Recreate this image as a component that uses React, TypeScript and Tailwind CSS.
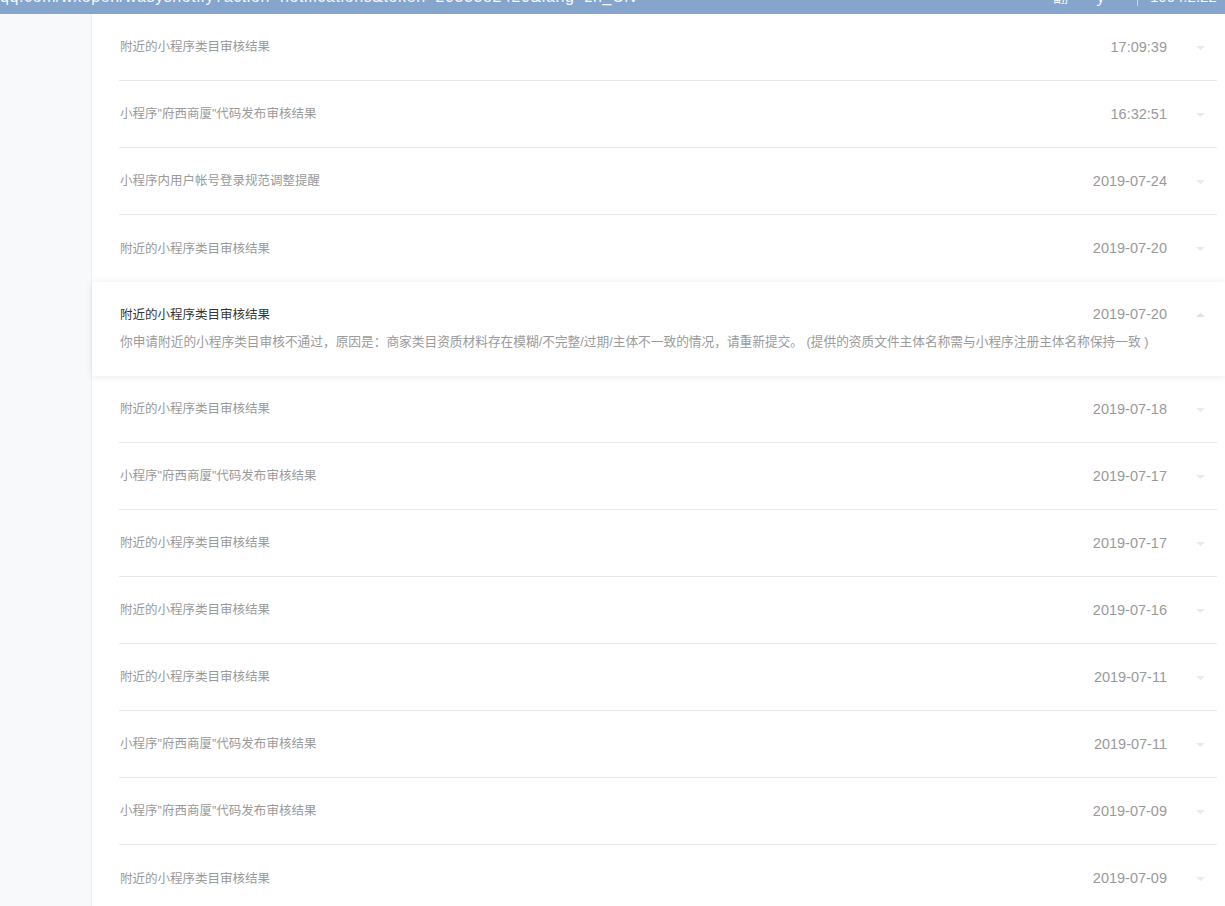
import React from 'react'

type Notice = { title: string; date: string; detail?: string }

const notices: Notice[] = [
  { title: '附近的小程序类目审核结果', date: '17:09:39' },
  { title: '小程序"府西商厦"代码发布审核结果', date: '16:32:51' },
  { title: '小程序内用户帐号登录规范调整提醒', date: '2019-07-24' },
  { title: '附近的小程序类目审核结果', date: '2019-07-20' },
  {
    title: '附近的小程序类目审核结果',
    date: '2019-07-20',
    detail:
      '你申请附近的小程序类目审核不通过，原因是：商家类目资质材料存在模糊/不完整/过期/主体不一致的情况，请重新提交。 (提供的资质文件主体名称需与小程序注册主体名称保持一致 )',
  },
  { title: '附近的小程序类目审核结果', date: '2019-07-18' },
  { title: '小程序"府西商厦"代码发布审核结果', date: '2019-07-17' },
  { title: '附近的小程序类目审核结果', date: '2019-07-17' },
  { title: '附近的小程序类目审核结果', date: '2019-07-16' },
  { title: '附近的小程序类目审核结果', date: '2019-07-11' },
  { title: '小程序"府西商厦"代码发布审核结果', date: '2019-07-11' },
  { title: '小程序"府西商厦"代码发布审核结果', date: '2019-07-09' },
  { title: '附近的小程序类目审核结果', date: '2019-07-09' },
]

function Caret({ up }: { up?: boolean }) {
  return (
    <svg width="9" height="4" viewBox="0 0 9 4" className="block">
      {up ? (
        <path d="M0 4 L4.5 0 L9 4 Z" fill="#e0e0e0" />
      ) : (
        <path d="M0 0 L4.5 4 L9 0 Z" fill="#eaeaea" />
      )}
    </svg>
  )
}

export default function App() {
  return (
    <div
      className="w-[1225px] h-[906px] overflow-hidden bg-white flex flex-col"
      style={{ fontFamily: '"Liberation Sans", "Noto Sans CJK SC", sans-serif' }}
    >
      {/* Cut-off address bar */}
      <div className="h-[14px] bg-[#86a5cc] overflow-hidden flex items-start shrink-0">
        <div className="-mt-[12px] flex-1 text-[16px] leading-[18px] tracking-[0.6px] text-[#f4f7fb] whitespace-nowrap">
          qq.com/wxopen/wasysnotify?action=notifications&amp;token=2033382420&amp;lang=zh_CN
        </div>
        <div className="-mt-[12px] flex items-start text-[15px] leading-[18px] text-[#f4f7fb] whitespace-nowrap">
          <span className="w-[40px]">翻</span>
          <span className="w-[44px]">ｙ</span>
          <span className="w-px h-[6px] mt-[12px] bg-[#c9d6e6]"></span>
          <span className="pl-[12px] w-[87px]">1004.2.22</span>
        </div>
      </div>

      <div className="flex flex-1 min-h-0">
        {/* Left rail */}
        <div className="w-[92px] shrink-0 bg-[#f8f9fb] border-r border-[#eceef1]"></div>

        {/* Notice list */}
        <div className="flex-1 flex flex-col">
          {notices.map((n, i) =>
            n.detail ? (
              <div
                key={i}
                className="relative z-10 bg-white shadow-[0_1px_8px_rgba(0,0,0,0.09)] pl-[28px] pr-[8px] pt-[23px] pb-[24px]"
              >
                <div className="flex items-center h-[20px]">
                  <div className="flex-1 text-[12.5px] text-[#353535]">{n.title}</div>
                  <div className="text-[14.5px] text-[#9a9a9a]">{n.date}</div>
                  <div className="ml-[28px] mr-[12px] w-[10px] flex justify-center">
                    <Caret up />
                  </div>
                </div>
                <div className="mt-[7px] h-[20px] leading-[20px] text-[12.7px] text-[#9b9b9b] whitespace-nowrap">
                  {n.detail}
                </div>
              </div>
            ) : (
              <div key={i} className="pl-[27px] pr-[8px]">
                <div
                  className={`flex items-center h-[67px] pt-px ${
                    notices[i + 1]?.detail || i === notices.length - 1 ? '' : 'border-b border-[#e7e8eb]'
                  }`}
                >
                  <div className="flex-1 pl-px text-[12.5px] text-[#9a9a9a]">{n.title}</div>
                  <div className="text-[14.5px] text-[#9a9a9a]">{n.date}</div>
                  <div className="ml-[28px] mr-[12px] w-[10px] flex justify-center">
                    <Caret />
                  </div>
                </div>
              </div>
            )
          )}
        </div>
      </div>
    </div>
  )
}
